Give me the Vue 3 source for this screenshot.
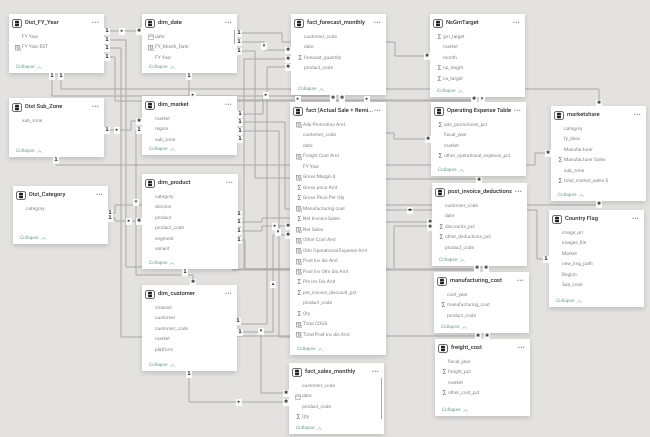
<script setup>
const c = (name) => ({ name, icon: 'c' })
const s = (name) => ({ name, icon: 's' })
const d = (name) => ({ name, icon: 'd' })
const p = (name) => ({ name, icon: '' })

const tables = [
  { title: 'Dist_FY_Year', x: 9, y: 14, w: 95, h: 59, rows: [p('FY Year'), c('FY Year EST')] },
  { title: 'dim_date', x: 142, y: 14, w: 95, h: 59, bar: [16, 14], rows: [d('date'), c('FY_Month_Date'), p('FY Year')] },
  { title: 'Dist Sub_Zone', x: 9, y: 98, w: 95, h: 59, rows: [p('sub_zone')] },
  { title: 'dim_market', x: 142, y: 96, w: 95, h: 59, rows: [p('market'), p('region'), p('sub_zone')] },
  { title: 'Dist_Category', x: 13, y: 186, w: 95, h: 58, rows: [p('category')] },
  { title: 'dim_product', x: 142, y: 174, w: 96, h: 95, rows: [p('category'), p('division'), p('product'), p('product_code'), p('segment'), p('variant')] },
  { title: 'dim_customer', x: 142, y: 285, w: 95, h: 86, rows: [p('channel'), p('customer'), p('customer_code'), p('market'), p('platform')] },
  { title: 'fact_forecast_monthly', x: 291, y: 14, w: 95, h: 81, rows: [p('customer_code'), p('date'), s('forecast_quantity'), p('product_code')] },
  { title: 'fact (Actual Sale + Remi...', x: 290, y: 102, w: 96, h: 253, rows: [c('Ads Promotion Amt'), p('customer_code'), p('date'), c('Freight Cost Amt'), p('FY Year'), c('Gross Margin $'), s('Gross price Amt'), s('Gross Price Per Qty'), c('Manufacturing cost'), s('Net Invoice Sales'), c('Net Sales'), c('Other Cost Amt'), c('Othr Operational Expense Amt'), c('Post Inv dis Amt'), c('Post Inv Othr dis Amt'), s('Pre Inv Dis Amt'), s('pre_invoice_discount_pct'), p('product_code'), s('Qty'), c('Total COGS'), c('Total Post Inv dis Amt')] },
  { title: 'fact_sales_monthly', x: 289, y: 363, w: 95, h: 71, bar: [15, 41], rows: [p('customer_code'), d('date'), p('product_code'), s('Qty')] },
  { title: 'NsGmTarget', x: 430, y: 14, w: 95, h: 83, rows: [s('gm_target'), p('market'), p('month'), s('np_target'), s('ns_target')] },
  { title: 'Operating Expense Table', x: 431, y: 102, w: 95, h: 74, rows: [s('ads_promotions_pct'), p('fiscal_year'), p('market'), s('other_operational_expense_pct')] },
  { title: 'post_invoice_deductions', x: 432, y: 183, w: 95, h: 83, rows: [p('customer_code'), p('date'), s('discounts_pct'), s('other_deductions_pct'), p('product_code')] },
  { title: 'manufacturing_cost', x: 434, y: 272, w: 95, h: 61, rows: [p('cost_year'), s('manufacturing_cost'), p('product_code')] },
  { title: 'freight_cost', x: 435, y: 339, w: 95, h: 77, rows: [p('fiscal_year'), s('freight_pct'), p('market'), s('other_cost_pct')] },
  { title: 'marketshare', x: 551, y: 106, w: 95, h: 95, rows: [p('category'), p('fy_desc'), p('Manufacturer'), s('Manufacturer Sales'), p('sub_zone'), s('total_market_sales $')] },
  { title: 'Country Flag', x: 549, y: 210, w: 95, h: 97, rows: [p('image_url'), p('images_file'), p('Market'), p('new_img_path'), p('Region'), p('Sub_zone')] }
]

const lines = [
  '104,31 140,31',
  '104,40 126,40 126,267 142,267',
  '104,48 121,48 121,337 142,337',
  '104,57 115,57 115,101 142,101',
  '52,73 52,96 333,96 333,100',
  '61,73 61,89 599,89 599,106',
  '189,73 189,100 474,100',
  '237,101 474,101',
  '56,157 56,165 535,165 535,153 551,153',
  '104,130 131,130 131,121 140,121',
  '140,130 136,130 136,275 193,275 193,285',
  '108,213 115,213 115,205 142,205',
  '108,218 115,218 115,221 142,221',
  '237,33 282,33 282,42 291,42',
  '237,42 264,42 264,50 291,50',
  '237,51 255,51 255,178 290,178',
  '244,59 291,59',
  '244,59 244,269',
  '267,67 291,67',
  '267,67 267,324 237,324',
  '237,114 263,114 263,95',
  '237,122 285,122 285,209 290,209',
  '237,131 279,131 279,337 290,337',
  '238,222 262,222 262,218 290,218',
  '238,231 262,231 262,226 290,226',
  '238,240 245,240 245,269 290,269',
  '232,269 477,269',
  '232,270 477,270',
  '237,336 478,336',
  '273,235 290,235',
  '273,235 273,332 237,332',
  '261,331 261,393 289,393',
  '189,371 189,402 289,402',
  '386,42 395,42 395,56 430,56',
  '386,133 394,133 394,139 431,139',
  '386,179 479,179 479,183',
  '386,205 599,205 599,201',
  '386,210 537,210 537,259 549,259',
  '386,222 432,222',
  '394,226 394,268',
  '394,226 432,226',
  '482,97 482,102',
  '487,266 487,272',
  '487,333 487,339'
]

const marks = [
  [107, 31, '1'], [122, 31, 'r'], [139, 31, '*'], [107, 40, '1'], [107, 48, '1'], [107, 57, '1'],
  [52, 76, '1'], [61, 76, '1'], [189, 76, '1'], [193, 95, 'r'],
  [107, 130, '1'], [117, 130, 'r'], [139, 121, '*'], [139, 130, '1'],
  [56, 160, '1'], [110, 213, '1'], [110, 218, '1'], [136, 202, 'd'], [129, 221, 'r'], [139, 221, '*'],
  [185, 272, '1'], [193, 282, '*'],
  [239, 33, '1'], [239, 42, '1'], [239, 51, '1'], [264, 46, 'd'],
  [288, 50, '*'], [288, 59, '*'], [288, 67, '*'], [266, 95, 'r'],
  [298, 99, 'r'], [333, 98, '*'], [342, 98, '*'], [367, 99, 'r'],
  [240, 114, '1'], [240, 122, '1'], [240, 131, '1'], [240, 139, '1'],
  [239, 214, '1'], [239, 222, '1'], [239, 231, '1'], [239, 240, '1'],
  [275, 226, 'r'], [288, 226, '*'], [278, 232, 'd'], [288, 235, '*'], [273, 284, 'u'],
  [238, 321, '1'], [240, 332, '1'], [261, 331, 'd'], [189, 374, '1'], [239, 402, 'r'],
  [286, 393, '*'], [286, 402, '*'],
  [427, 56, '*'], [428, 139, '*'], [410, 210, 'b'], [430, 222, '*'], [430, 227, '*'],
  [474, 99, '*'], [482, 99, 'd'], [479, 180, '*'], [599, 103, '*'], [548, 153, '*'], [599, 204, '*'], [546, 259, '1'],
  [477, 268, '*'], [486, 268, '*'], [478, 336, '*'], [487, 336, '*']
]

const glyph = { '1': '1', '*': '✱', r: '▸', d: '▾', u: '▴', b: '◂▸' }
const boxStyle = (t) => ({ left: t.x + 'px', top: t.y + 'px', width: t.w + 'px', height: t.h + 'px' })
const markStyle = (m) => ({ left: m[0] + 'px', top: m[1] + 'px' })
const barStyle = (t) => ({ top: t.bar[0] + 'px', height: t.bar[1] + 'px' })
</script>

<template>
  <div class="canvas">
    <svg class="wires" width="650" height="437" viewBox="0 0 650 437">
      <polyline v-for="(l, i) in lines" :key="i" :points="l" />
    </svg>

    <section v-for="t in tables" :key="t.title" class="table" :style="boxStyle(t)">
      <header class="head">
        <svg class="tbl" width="10" height="9" viewBox="0 0 10 9">
          <rect x="0.5" y="0.5" width="9" height="8" rx="1.6" fill="#fff" stroke="#444" stroke-width="0.8" />
          <rect x="3" y="1.8" width="4" height="5.4" rx="0.7" fill="#222" />
          <line x1="3" y1="4.5" x2="7" y2="4.5" stroke="#fff" stroke-width="0.5" />
        </svg>
        <span class="title">{{ t.title }}</span>
        <span class="more">···</span>
      </header>
      <ul class="rows">
        <li v-for="r in t.rows" :key="r.name" class="row">
          <span class="ico">
            <span v-if="r.icon === 's'" class="sigma">Σ</span>
            <svg v-else-if="r.icon === 'c'" width="6" height="6" viewBox="0 0 6 6">
              <rect x="0.4" y="0.4" width="4.4" height="4.6" fill="none" stroke="#888" stroke-width="0.6" />
              <path d="M0.4 2H4.8M2.5 .4V5M3.4 3.4H5.6V5.6H3.4Z" fill="#fff" stroke="#888" stroke-width="0.5" />
            </svg>
            <svg v-else-if="r.icon === 'd'" width="6" height="6" viewBox="0 0 6 6">
              <rect x="0.4" y="0.8" width="5.2" height="4.8" rx="0.6" fill="none" stroke="#888" stroke-width="0.6" />
              <path d="M0.4 2.2H5.6" stroke="#888" stroke-width="0.6" />
            </svg>
          </span>
          <span class="field">{{ r.name }}</span>
        </li>
      </ul>
      <footer class="foot">
        <span>Collapse</span>
        <svg width="5" height="3" viewBox="0 0 5 3"><path d="M.4 2.6 2.5.6 4.6 2.6" fill="none" stroke="#6d9f95" stroke-width="0.6" /></svg>
      </footer>
      <i v-if="t.bar" class="bar" :style="barStyle(t)"></i>
    </section>

    <span v-for="(m, i) in marks" :key="'m' + i" class="mark" :style="markStyle(m)">{{ glyph[m[2]] }}</span>
  </div>
</template>

<style scoped>
.canvas {
  position: relative;
  width: 650px;
  height: 437px;
  overflow: hidden;
  background: #e3e2e0;
  font-family: Roboto, "Liberation Sans", sans-serif;
  text-rendering: geometricPrecision;
  filter: blur(0.35px);
}
.wires {
  position: absolute;
  inset: 0;
}
.wires polyline {
  fill: none;
  stroke: #a8a8a5;
  stroke-width: 1;
}
.table {
  position: absolute;
  display: flex;
  flex-direction: column;
  background: #fff;
  box-shadow: 0 2px 5px rgba(0, 0, 0, 0.16);
}
.head {
  display: flex;
  align-items: center;
  gap: 3px;
  height: 18px;
  flex: none;
  padding: 0 5px 0 3px;
}
.tbl {
  flex: none;
}
.title {
  flex: 1;
  min-width: 0;
  font-size: 5.8px;
  font-weight: 500;
  color: #2e2e2e;
  white-space: nowrap;
}
.more {
  flex: none;
  font-size: 8px;
  line-height: 8px;
  font-weight: 700;
  color: #777;
}
.rows {
  list-style: none;
  margin: 0;
  padding: 0;
}
.row {
  display: flex;
  align-items: center;
  height: 10.5px;
  font-size: 4.8px;
  color: #868686;
  white-space: nowrap;
}
.ico {
  flex: none;
  display: flex;
  align-items: center;
  justify-content: flex-end;
  width: 11.5px;
  margin-right: 1.5px;
}
.sigma {
  font-size: 7px;
  line-height: 7px;
  color: #777;
}
.foot {
  display: flex;
  align-items: center;
  gap: 2px;
  margin-top: auto;
  padding: 0 0 3px 7px;
  font-size: 4.8px;
  color: #6d9f95;
}
.bar {
  position: absolute;
  right: 2px;
  width: 1.4px;
  background: #a6a6a6;
}
.mark {
  position: absolute;
  display: flex;
  align-items: center;
  justify-content: center;
  width: 6px;
  height: 7px;
  margin: -3.5px 0 0 -3px;
  background: #fbfbfb;
  font-family: "DejaVu Sans", sans-serif;
  font-size: 5px;
  font-weight: 700;
  line-height: 7px;
  color: #333;
}
</style>
